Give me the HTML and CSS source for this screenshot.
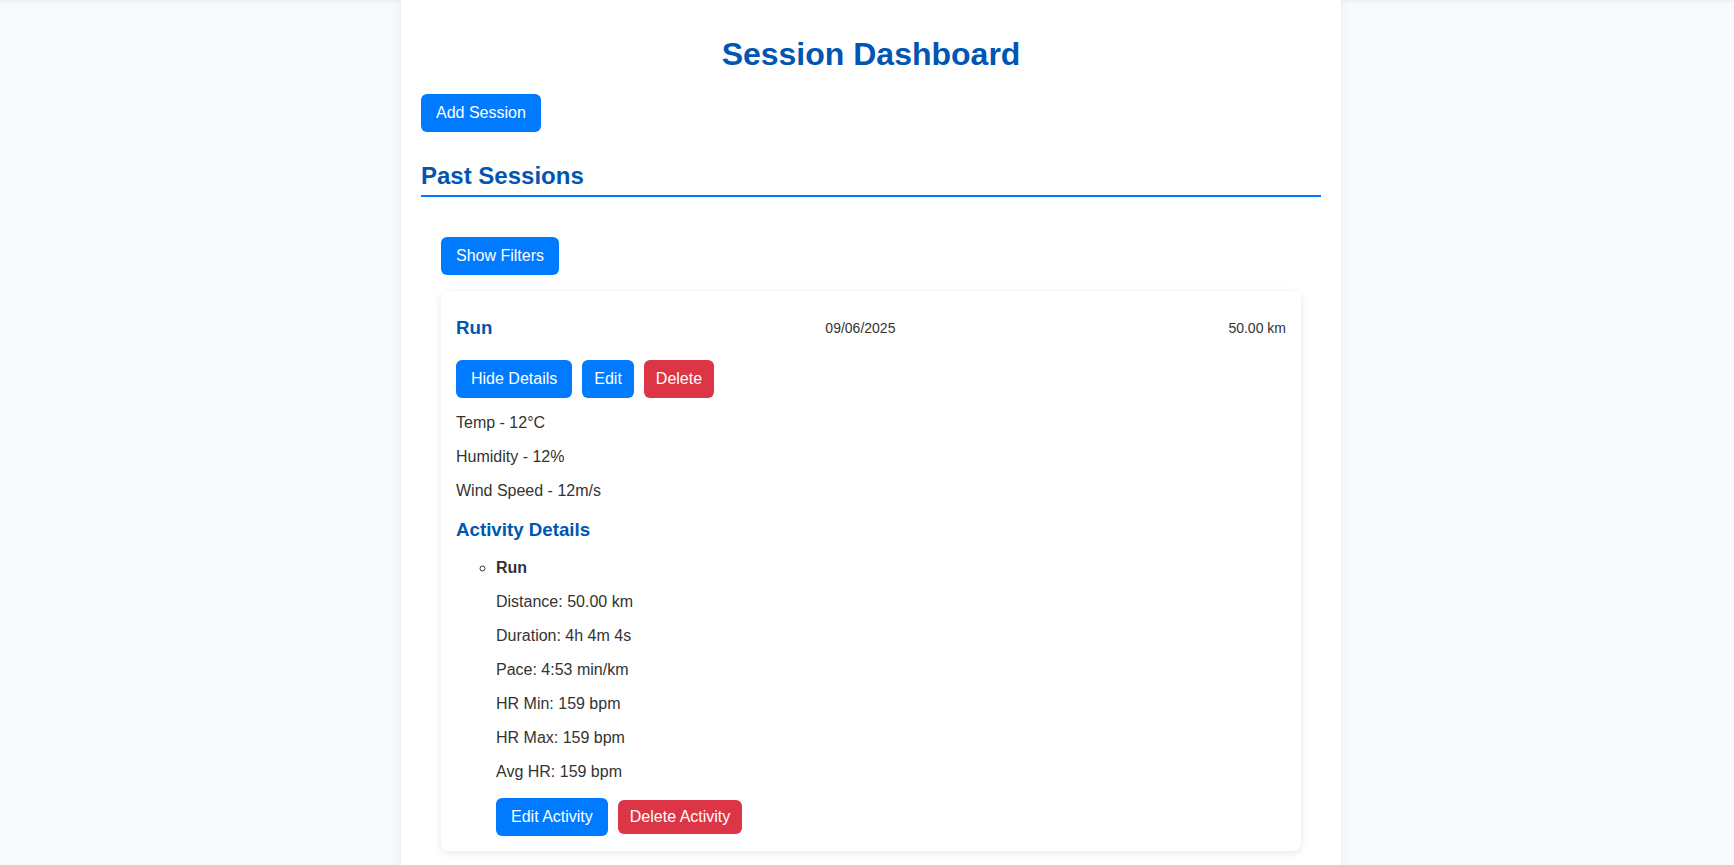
FILE: index.html
```html
<!DOCTYPE html>
<html lang="en">
<head>
<meta charset="utf-8">
<title>Session Dashboard</title>
<link rel="stylesheet" href="styles.css">
</head>
<body>
<div class="container">
  <h1 class="page-title">Session Dashboard</h1>
  <div class="toolbar">
    <button class="btn btn-primary">Add Session</button>
  </div>
  <h2 class="section-title">Past Sessions</h2>
  <div class="session-list">
    <button class="btn btn-primary filter-toggle">Show Filters</button>
    <div class="session-card">
      <div class="session-header">
        <h3 class="session-type">Run</h3>
        <span class="session-meta">09/06/2025</span>
        <span class="session-meta">50.00 km</span>
      </div>
      <div class="session-actions">
        <button class="btn btn-primary">Hide Details</button>
        <button class="btn btn-primary btn-compact">Edit</button>
        <button class="btn btn-danger btn-compact">Delete</button>
      </div>
      <div class="session-details">
        <p>Temp - 12°C</p>
        <p>Humidity - 12%</p>
        <p>Wind Speed - 12m/s</p>
        <h3 class="details-title">Activity Details</h3>
        <ul class="activity-list">
          <li>
            <strong>Run</strong>
            <p>Distance: 50.00 km</p>
            <p>Duration: 4h 4m 4s</p>
            <p>Pace: 4:53 min/km</p>
            <p>HR Min: 159 bpm</p>
            <p>HR Max: 159 bpm</p>
            <p>Avg HR: 159 bpm</p>
            <div class="activity-actions">
              <button class="btn btn-primary">Edit Activity</button>
              <button class="btn btn-danger btn-small">Delete Activity</button>
            </div>
          </li>
        </ul>
      </div>
    </div>
  </div>
</div>
</body>
</html>
```

FILE: styles.css
```css
html {
  background: #f8f9fa;
}

body {
  margin: 0;
  padding-left: 8px;
  font-family: "Liberation Sans", Arial, sans-serif;
  color: #333;
  box-shadow: inset 0 4px 4px -3px rgba(0, 0, 0, 0.06);
}

.container {
  max-width: 900px;
  margin: 0 auto;
  padding: 15px 20px 20px;
  background: #fff;
  box-shadow: 0 0 10px rgba(0, 0, 0, 0.06);
}

.page-title {
  font-size: 32px;
  text-align: center;
  color: #0056b3;
  margin: 21px 0;
}

.toolbar {
  display: flex;
}

.btn {
  font-family: inherit;
  font-size: 16px;
  color: #fff;
  border: none;
  border-radius: 6px;
  padding: 10px 15px;
  cursor: pointer;
}

.btn-primary {
  background: #007bff;
}

.btn-danger {
  background: #dc3545;
}

.btn-compact {
  padding: 10px 12px;
}

.btn-small {
  padding: 8px 12px;
}

.section-title {
  font-size: 24px;
  color: #0056b3;
  margin: 30px 0 20px;
  padding-bottom: 5px;
  border-bottom: 2px solid #007bff;
}

.session-list {
  display: flex;
  flex-direction: column;
  align-items: flex-start;
  gap: 16px;
  padding: 20px;
}

.session-card {
  align-self: stretch;
  background: #fff;
  border-radius: 8px;
  box-shadow: 0 2px 8px rgba(0, 0, 0, 0.1);
  padding: 15px;
}

.session-header {
  display: flex;
  justify-content: space-between;
  align-items: center;
  margin-bottom: 10px;
}

.session-type {
  margin: 11px 0;
  font-size: 18.72px;
  color: #0056b3;
}

.session-meta {
  font-size: 14px;
}

.session-actions {
  display: flex;
  gap: 10px;
}

.session-details p {
  margin: 16px 0;
}

.details-title {
  font-size: 18.72px;
  color: #0056b3;
  margin: 18.72px 0;
}

.activity-list {
  list-style-type: circle;
  padding-left: 40px;
  margin: 18.72px 0 0;
}

.activity-actions {
  display: flex;
  align-items: center;
  gap: 10px;
  margin-top: 17px;
}
```
